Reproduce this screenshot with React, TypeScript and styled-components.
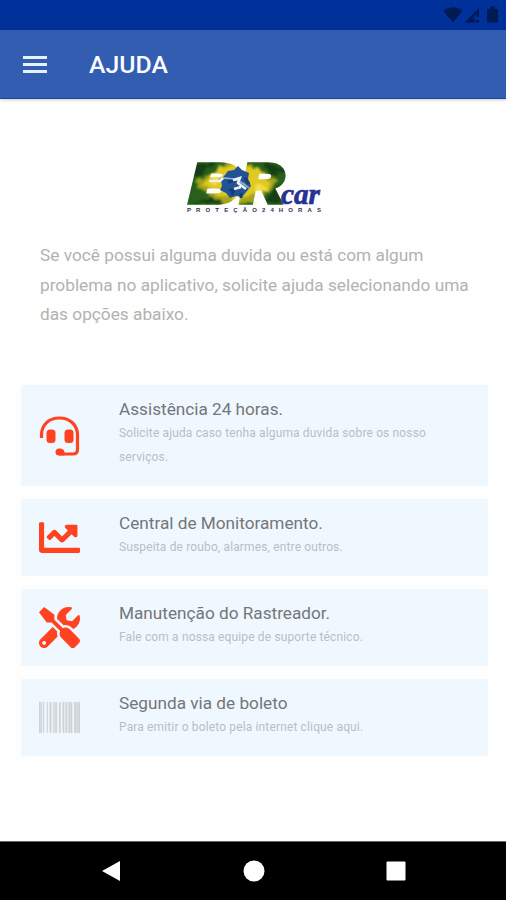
import React from 'react';
import styled, { createGlobalStyle } from 'styled-components';
import { FaBarcode, FaChartLine, FaTools } from 'react-icons/fa';

const GlobalStyle = createGlobalStyle`
  * { box-sizing: border-box; }
  body { margin: 0; background: #fff; font-family: Roboto, "Liberation Sans", sans-serif; }
`;

const Screen = styled.div`
  width: 506px;
  height: 900px;
  display: flex;
  flex-direction: column;
  overflow: hidden;
  background: #fefefe;
`;

const StatusBar = styled.div`
  height: 30px;
  flex: none;
  display: flex;
  justify-content: flex-end;
  background: #00309a;
`;

const Header = styled.header`
  height: 69px;
  flex: none;
  display: flex;
  align-items: center;
  gap: 42px;
  padding: 1px 23px 0;
  background: #335db0;
  border-bottom: 1px solid #164aa0;
  box-shadow: 0 1px 3px rgba(80, 50, 40, 0.25);
`;

const MenuButton = styled.button`
  width: 24px;
  height: 17px;
  padding: 0;
  border: 0;
  background: none;
  display: flex;
  flex-direction: column;
  justify-content: space-between;
`;

const MenuLine = styled.span`
  height: 3px;
  background: #e6f1ff;
`;

const Title = styled.h1`
  margin: 0;
  color: #fafcff;
  font-size: 24.8px;
  line-height: 30px;
  font-weight: 500;
`;

const Content = styled.main`
  flex: 1;
  display: flex;
  flex-direction: column;
`;

const Logo = styled.svg`
  display: block;
  width: 150px;
  height: 65px;
  margin: 56px 0 0 180px;
`;

const Intro = styled.p`
  margin: 21px 0 0 40px;
  color: #b2b2b2;
  font-size: 17.25px;
  line-height: 29.5px;
  white-space: nowrap;
`;

const CardList = styled.div`
  margin: 55.5px 18px 0 21px;
  display: flex;
  flex-direction: column;
  gap: 13px;
`;

const Card = styled.section<{ $tall?: boolean }>`
  height: ${({ $tall }) => ($tall ? 101 : 77)}px;
  display: flex;
  align-items: center;
  background: #f0f8ff;
`;

const IconBox = styled.div<{ $color: string }>`
  width: 98px;
  flex: none;
  display: flex;
  padding-left: 18px;
  color: ${({ $color }) => $color};
`;

const Barcode = styled(FaBarcode)`
  stroke: currentColor;
  stroke-width: 5px;
`;

const CardText = styled.div`
  height: 100%;
  padding-top: 12px;
`;

const CardTitle = styled.h2`
  margin: 0;
  color: #747678;
  font-size: 17.2px;
  line-height: 24px;
  font-weight: 400;
`;

const CardDescription = styled.p`
  margin: 0;
  width: 325px;
  color: #b9bec3;
  font-size: 12px;
  letter-spacing: 0.14px;
  line-height: 24px;
`;

const NavBar = styled.nav`
  height: 59px;
  flex: none;
  display: flex;
  align-items: center;
  justify-content: space-between;
  padding: 0 100px 0 101px;
  background: #000;
  border-top: 1px solid #666;
`;

const StatusIcons = () => (
  <svg width="86" height="30" viewBox="420 0 86 30" fill="#001a55">
    <path d="M443.500 11 Q453 3.500 462.500 11 L453 22.500 Z" />
    <path fillRule="evenodd" d="M464.500 22.500 L479 8 V17 H476.500 V14 L472 18.500 H474.500 V22.500 Z M475.500 20 h3.500 v2.500 h-3.500z" />
    <path d="M487 9 h3 V6.500 h5 V9 h3 V22.500 h-11z" />
  </svg>
);

const BrandLogo = () => (
  <Logo viewBox="0 0 150 65">
    <defs>
      <filter id="paint" x="-20%" y="-20%" width="140%" height="140%">
        <feTurbulence type="fractalNoise" baseFrequency="0.13" numOctaves="3" seed="4" result="noise" />
        <feDisplacementMap in="SourceGraphic" in2="noise" scale="9" xChannelSelector="R" yChannelSelector="G" />
        <feGaussianBlur stdDeviation="0.8" />
      </filter>
      <pattern id="flag" patternUnits="userSpaceOnUse" width="150" height="65">
        <rect width="150" height="65" fill="#28601b" />
        <g filter="url(#paint)">
          <path d="M7 10 L35 8 L18 23z M10 48 L34 42 L43 48z M82 8 L107 14 L96 23z M85 48 L94 32 L102 48z" fill="#143d12" />
          <path d="M14 29 L50 5 L72 9 L98 26 L76 46 L49 50 Z" fill="#a5a51d" />
          <path d="M22 30 L38 12 L56 10 L79 14 L91 28 L75 39 L53 47 Z" fill="#dfca23" />
          <path d="M32 17 L43 23 L35 29z M75 28 L88 33 L75 41z" fill="#f5df45" />
        </g>
      </pattern>
    </defs>
    <g fontFamily="Liberation Sans" fontSize="54" fontWeight="700" fontStyle="italic" fill="url(#flag)" stroke="url(#flag)" strokeWidth="5.500">
      <text x="10" y="47" textLength="48" lengthAdjust="spacingAndGlyphs">B</text>
      <text x="61" y="47" textLength="42" lengthAdjust="spacingAndGlyphs">R</text>
    </g>
    <path d="M41 25 L45 20 L48 16 L54 15 L58 11 L62 15 L69 18 L68 24 L71 31 L67 36 L62 42 L56 41 L50 43 L46 38 L40 35 L42 31z" fill="#225397" />
    <path d="M48 27 L54 25 M65 23 L69 29 M49 35 L54 35 L52 40 M61 38 L61 43" fill="none" stroke="#163c75" strokeWidth="3" />
    <path d="M38 24 Q55 20 69 33" fill="none" stroke="#8fb0cf" strokeWidth="1.700" />
    <path d="M29 26 h11 l3 -3 M53 25 L60 23 L58 28 L66 34 M54 34 L61 32" fill="none" stroke="#eef0f1" strokeWidth="2.500" />
    <g transform="translate(101 49) scale(1 1.100)">
      <text textLength="39" lengthAdjust="spacingAndGlyphs" fontFamily="Liberation Serif" fontSize="26" fontWeight="700" fontStyle="italic" fill="#273293" stroke="#273293" strokeWidth=".6">car</text>
    </g>
    <text x="7" y="56.500" textLength="134" lengthAdjust="spacing" fontFamily="Liberation Sans" fontSize="6" fontWeight="700" fill="#303052">PROTEÇÃO24HORAS</text>
  </Logo>
);

const HeadsetIcon = () => (
  <svg width="42" height="42" viewBox="0 0 42 42" fill="none" stroke="currentColor">
    <path d="M2.500 23 V20 C2.500 9.500 10 3 20.500 3 S38.500 10 38.500 20 V34.500 Q38.500 39 34 39 H20" strokeWidth="3.200" />
    <rect x="7.500" y="14.500" width="9" height="13.500" rx="3.500" fill="currentColor" stroke="none" />
    <rect x="25.500" y="14.500" width="9" height="13.500" rx="3.500" fill="currentColor" stroke="none" />
    <path d="M20 33.500 h1 q4 0 4.500 3.500 v3.500 H20 a3.500 3.500 0 0 1 0-7z" fill="currentColor" stroke="none" />
  </svg>
);

const options = [
  { title: 'Assistência 24 horas.', text: 'Solicite ajuda caso tenha alguma duvida sobre os nosso serviços.', icon: <HeadsetIcon />, color: '#ff421f', tall: true },
  { title: 'Central de Monitoramento.', text: 'Suspeita de roubo, alarmes, entre outros.', icon: <FaChartLine size={41} />, color: '#ff421f' },
  { title: 'Manutenção do Rastreador.', text: 'Fale com a nossa equipe de suporte técnico.', icon: <FaTools size={41} />, color: '#ff421f' },
  { title: 'Segunda via de boleto', text: 'Para emitir o boleto pela internet clique aqui.', icon: <Barcode size={41} />, color: '#ced2d5' },
];

export default function App() {
  return (
    <Screen>
      <GlobalStyle />
      <StatusBar><StatusIcons /></StatusBar>
      <Header>
        <MenuButton aria-label="Menu"><MenuLine /><MenuLine /><MenuLine /></MenuButton>
        <Title>AJUDA</Title>
      </Header>
      <Content>
        <BrandLogo />
        <Intro>Se você possui alguma duvida ou está com algum<br />problema no aplicativo, solicite ajuda selecionando uma<br />das opções abaixo.</Intro>
        <CardList>
          {options.map((o) => (
            <Card key={o.title} $tall={o.tall}>
              <IconBox $color={o.color}>{o.icon}</IconBox>
              <CardText>
                <CardTitle>{o.title}</CardTitle>
                <CardDescription>{o.text}</CardDescription>
              </CardText>
            </Card>
          ))}
        </CardList>
      </Content>
      <NavBar>
        <svg width="20" height="22" viewBox="0 0 20 22" fill="#fff"><path d="M1 11 L19 1 V21z" /></svg>
        <svg width="22" height="22" viewBox="0 0 22 22" fill="#fff"><circle cx="11" cy="11" r="10.500" /></svg>
        <svg width="20" height="20" viewBox="0 0 20 20" fill="#fff"><rect x=".5" y=".5" width="19" height="19" rx="1" /></svg>
      </NavBar>
    </Screen>
  );
}
